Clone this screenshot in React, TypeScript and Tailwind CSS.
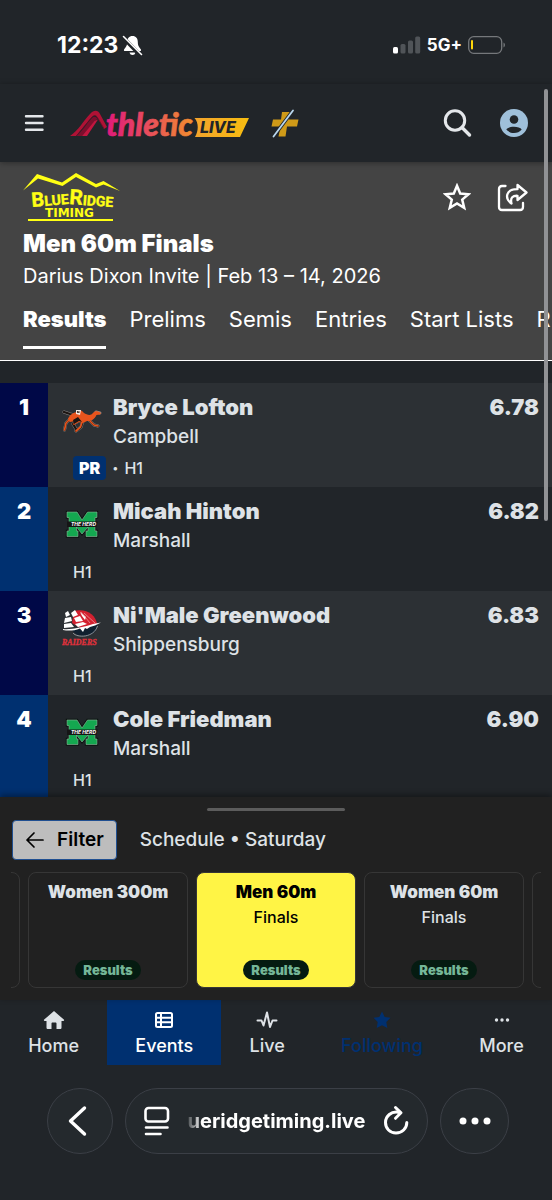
import React from 'react';
import clsx from 'clsx';

type Team = 'campbell' | 'marshall' | 'shippensburg';

interface Result {
  place: number;
  name: string;
  school: string;
  team: Team;
  heat: string;
  mark: string;
  pr?: boolean;
}

const results: Result[] = [
  { place: 1, name: 'Bryce Lofton', school: 'Campbell', team: 'campbell', heat: 'H1', mark: '6.78', pr: true },
  { place: 2, name: 'Micah Hinton', school: 'Marshall', team: 'marshall', heat: 'H1', mark: '6.82' },
  { place: 3, name: "Ni'Male Greenwood", school: 'Shippensburg', team: 'shippensburg', heat: 'H1', mark: '6.83' },
  { place: 4, name: 'Cole Friedman', school: 'Marshall', team: 'marshall', heat: 'H1', mark: '6.90' },
];

const tabs = ['Results', 'Prelims', 'Semis', 'Entries', 'Start Lists', 'R'];

const events = [
  { title: 'Women 300m', round: '', active: false },
  { title: 'Men 60m', round: 'Finals', active: true },
  { title: 'Women 60m', round: 'Finals', active: false },
];

function StatusBar() {
  return (
    <div className="flex items-center justify-between pt-[30px] pl-[57px] pr-[46px] text-white">
      <div className="flex items-center gap-1">
        <span className="text-[23px] leading-[30px] font-bold">12:23</span>
        <svg width="21" height="21" viewBox="0 0 21 21" fill="none">
          <path d="M10.500 1C7 1 5.200 3.500 5.200 7C5.200 11 3.800 12 2.200 14.200C1.600 15.200 2 16 3 16H18C19 16 19.400 15.200 18.800 14.200C17.200 12 15.800 11 15.800 7C15.800 3.500 14 1 10.500 1Z" fill="white" />
          <path d="M7.500 17.500H13.500C13 19.200 12 20 10.500 20S8 19.200 7.500 17.500Z" fill="white" />
          <path d="M0.500 2L18.500 20.500" stroke="#212529" strokeWidth="4" />
          <path d="M1.500 1.500L19.500 19.500" stroke="white" strokeWidth="1.600" strokeLinecap="round" />
        </svg>
      </div>
      <div className="flex items-center gap-[6px]">
        <svg width="28" height="18" viewBox="0 0 28 18">
          <rect x="0" y="11" width="5" height="6.500" rx="1.500" fill="white" />
          <rect x="7.500" y="8" width="5" height="9.500" rx="1.500" fill="#505458" />
          <rect x="15" y="4.500" width="5" height="13" rx="1.500" fill="#505458" />
          <rect x="22.200" y="0.500" width="5" height="17" rx="1.500" fill="#505458" />
        </svg>
        <span className="text-[17px] leading-[30px] font-bold">5G+</span>
        <svg width="38" height="18" viewBox="0 0 38 18" fill="none">
          <rect x="0.700" y="0.700" width="33" height="16.600" rx="5" stroke="#75787b" strokeWidth="1.300" />
          <rect x="3" y="4" width="2" height="9.500" rx="1" fill="#ffd60a" />
          <path d="M35.500 6.500C37.500 7.500 37.500 10.500 35.500 11.500Z" fill="#75787b" />
        </svg>
      </div>
    </div>
  );
}

function AthleticLiveLogo() {
  return (
    <svg width="180" height="44" viewBox="0 -8 180 44" role="img" aria-label="AthleticLIVE">
      <defs>
        <linearGradient id="wordmark" gradientUnits="userSpaceOnUse" x1="35" y1="0" x2="126" y2="0">
          <stop offset="0" stopColor="#e0187c" />
          <stop offset="0.500" stopColor="#e8505a" />
          <stop offset="1" stopColor="#f2932a" />
        </linearGradient>
        <linearGradient id="badge" x1="0" y1="0" x2="1" y2="0">
          <stop offset="0" stopColor="#f2a32c" />
          <stop offset="1" stopColor="#f7bd10" />
        </linearGradient>
      </defs>
      <path d="M0 27C8 22 14 11 20 5C24 0.500 28 1 30 5L37 18L34 20L27 8C25 5.500 23 6.500 21 9L6 27Z" fill="#b01235" />
      <path d="M6 27C12 23 17 14 22 9C24 7 26 7.500 27.500 10L24 13L12 27Z" fill="#7d0f2d" />
      <path d="M12 27L24.500 12L28 10.500L17 27Z" fill="#c2163f" />
      <path d="M6.500 27L21.500 8.500C24 6 26 6 27.500 8.500L34 19.500" fill="none" stroke="#5e0d26" strokeWidth="0.700" />
      <text x="36" y="27" fill="url(#wordmark)" stroke="url(#wordmark)" strokeWidth="0.600" className="font-['Lato'] text-[32px] font-black italic">thletic</text>
      <path d="M124.500 9H179L170 28H125C128.500 22 129 14 124.500 9Z" fill="url(#badge)" />
      <text x="130" y="24" fill="#212529" className="font-['Inter'] text-[16px] font-extrabold italic">LIVE</text>
    </svg>
  );
}

function TopNav() {
  return (
    <nav className="relative z-10 flex h-[78px] items-center pl-6 pr-6 shadow-[0_1px_6px_rgba(0,0,0,0.35)]">
      <button aria-label="Menu">
        <svg width="20" height="20" viewBox="0 0 20 20" stroke="#e4e7ea" strokeWidth="2.400" strokeLinecap="round">
          <path d="M2 3.200H18.500M2 10H18.500M2 16.800H18.500" />
        </svg>
      </button>
      <a href="#" className="ml-[26px]">
        <AthleticLiveLogo />
      </a>
      <a href="#" className="ml-[21px]" aria-label="Plus">
        <svg width="29" height="34" viewBox="0 0 29 34">
          <path d="M11 6H19L17.500 13.500H27.500L26 20.500H16L14.500 30.500H7.500L9.500 20.500H0.500L2 13.500H10Z" fill="#cf9a18" />
          <path d="M2.500 30.500L22 4.500" stroke="#212529" strokeWidth="3.600" />
          <path d="M2.500 30.500L22 4.500" stroke="#b9d7ee" strokeWidth="1.800" strokeLinecap="round" />
        </svg>
      </a>
      <div className="ml-auto flex items-center gap-7">
        <button aria-label="Search">
          <svg width="30" height="30" viewBox="0 0 30 30" fill="none" stroke="#e4e7ea" strokeLinecap="round">
            <circle cx="13" cy="12.500" r="9.700" strokeWidth="3" />
            <path d="M20 19.500L27.500 27" strokeWidth="3.400" />
          </svg>
        </button>
        <button aria-label="Account">
          <svg width="28" height="28" viewBox="0 0 28 28">
            <circle cx="14" cy="14" r="14" fill="#9fc0da" />
            <circle cx="14" cy="10.500" r="4.300" fill="#212529" />
            <path d="M6.300 20.500C8.500 16.700 19.500 16.700 21.700 20.500C18 25.200 10 25.200 6.300 20.500Z" fill="#212529" />
          </svg>
        </button>
      </div>
    </nav>
  );
}

function BlueRidgeLogo() {
  return (
    <svg width="98" height="54" viewBox="0 0 98 54" fill="#ffff14" role="img" aria-label="Blue Ridge Timing">
      <path d="M0 20.500L14 4L39 12.500L53 3L73 14L80.500 11L97 21L80.500 14.500L73 17.500L53 7L39.500 16L15 8.500Z" />
      <g className="font-['Roboto'] font-bold" stroke="#ffff14" strokeWidth="0.400">
        <text x="9" y="37" transform="rotate(-5 9 37)" className="text-[14px]">
          <tspan className="text-[20px]">B</tspan>LUE
        </text>
        <text x="46" y="34" transform="rotate(4 46 34)" className="text-[14px]">
          <tspan className="text-[21px]">R</tspan>IDGE
        </text>
      </g>
      <text x="22" y="47" className="font-['DejaVu_Sans'] text-[12px] font-bold">TIMING</text>
      <rect x="5" y="49" width="85" height="2" />
    </svg>
  );
}

function EventHeader() {
  return (
    <header className="overflow-hidden border-b border-white bg-[#444444] pt-2 pb-[11px] pl-[23px] text-white">
      <div className="flex items-center justify-between pr-6">
        <BlueRidgeLogo />
        <div className="flex items-center gap-[26px]">
          <button aria-label="Follow event">
            <svg width="28" height="28" viewBox="0 0 28 28" fill="none" stroke="white" strokeWidth="2.500">
              <path d="M14 2.800L17.200 10.500L25.500 11.200L19.200 16.600L21.200 24.800L14 20.400L6.800 24.800L8.800 16.600L2.500 11.200L10.800 10.500Z" />
            </svg>
          </button>
          <button aria-label="Share">
            <svg width="31" height="29" viewBox="0 0 31 29" fill="none" stroke="white" strokeWidth="2.300" strokeLinejoin="round" strokeLinecap="round">
              <path d="M8.500 3H5C3 3 2 4 2 6V24C2 26 3 27 5 27H23C25 27 26 26 26 24V20" />
              <path d="M20.500 2L29.500 9.500L20.500 17V12.800C16 12.500 13 14.500 14.500 20.500C7.500 15.500 8.500 6 20.500 6.200Z" />
            </svg>
          </button>
        </div>
      </div>
      <h1 className="mt-[5px] text-2xl leading-[30px] font-black">Men 60m Finals</h1>
      <p className="mt-[3px] text-[20px] leading-7">Darius Dixon Invite | Feb 13 – 14, 2026</p>
      <div className="mt-[14px] flex gap-[23px]">
        {tabs.map((tab, i) => (
          <button
            key={tab}
            className={clsx(
              'shrink-0 border-b-[3px] pb-3 text-[22px] leading-[30px]',
              i === 0 ? 'border-white font-black' : 'border-transparent',
            )}
          >
            {tab}
          </button>
        ))}
      </div>
    </header>
  );
}

function TeamLogo({ team }: { team: Team }) {
  if (team === 'campbell') {
    return (
      <svg width="40" height="38" viewBox="0 0 40 38" fill="none">
        <g stroke="#8f8a86" strokeWidth="3" strokeLinejoin="round" strokeLinecap="round">
          <path d="M12 14L8 13L2 11M10 16L4 22L2.500 29M17 20L11 23L14 28M21 20L19 26L14 30M26 18L32 24L36 25M24 17L31 16L34 11L38 12" />
        </g>
        <g stroke="#1c1512" strokeWidth="2.300" strokeLinejoin="round" strokeLinecap="round">
          <path d="M12 14L8 13L2 11M10 16L4 22L2.500 29M17 20L11 23L14 28M21 20L19 26L14 30M26 18L32 24L36 25" />
        </g>
        <path d="M6 18C8 13 12 12 14 11C17 8 20 9 22 12C25 14 29 15 31 12C33 9.500 36 10 39 12L38 13.500L34.500 14C32 19 29 20 25 20L21 22L13 20L8 21Z" fill="#e8541d" />
        <path d="M10 16L4 22L2.500 29M20.500 20L18.500 26L14 30M26 18L32 24L36 25M17 20L12 23" stroke="#e8541d" strokeWidth="1.700" strokeLinecap="round" strokeLinejoin="round" />
        <path d="M11 19L16 16L20 21L17 20L12 23Z" fill="#1c1512" />
        <path d="M14 9L19 9L18 14L14 13Z" fill="#f2e8e2" />
        <path d="M15.500 12V10L17 12V10" stroke="#3b2620" strokeWidth="0.800" />
      </svg>
    );
  }
  if (team === 'marshall') {
    return (
      <svg width="40" height="38" viewBox="0 0 40 38">
        <path
          d="M5 7H15L20 15L25.500 7H35V12.500H33V26H35V31.500H24V26H26V22L20 29L14.500 22V26H16V31.500H5V26H7V12.500H5Z"
          fill="#14a850"
          stroke="#0b1510"
          strokeWidth="2.400"
        />
        <path
          d="M5 7H15L20 15L25.500 7H35V12.500H33V26H35V31.500H24V26H26V22L20 29L14.500 22V26H16V31.500H5V26H7V12.500H5Z"
          fill="#14a850"
          stroke="#8fb39c"
          strokeWidth="0.600"
        />
        <path d="M5 16.500H36L34 22H5Z" fill="#151515" />
        <text x="9" y="21" fill="white" className="font-['Inter'] text-[5px] font-bold italic">THE HERD</text>
      </svg>
    );
  }
  return (
    <svg width="40" height="38" viewBox="0 0 40 38">
      <path d="M12 2C24 -1 34 6 35 15L20 20L10 14Z" fill="#d3202f" />
      <path d="M10 21L35 15C36 22 30 27 22 27C16 27 12 24 10 21Z" fill="#10202f" />
      <path d="M11 24C15 29 32 29 35.500 17" fill="none" stroke="#a9adb2" strokeWidth="0.800" />
      <path d="M1 20C8 21 22 18 31 15L39 13.500L33 16.500L28 18L25 20L23 19L21 23L18 19.500C12 22 6 22 1 21Z" fill="white" />
      <path d="M3 4L6 2L8 6L4 8ZM9 4L13 1L16 6L11 8ZM3 9L9 8L10 12L2 14ZM12 9L18 7L21 12L14 13ZM2 15L9 14L12 18L2 19ZM13 15L21 13L25 15L16 18ZM18 3L24 8L23 11L20 7Z" fill="white" />
      <path d="M22 4L33 14M19 3L28 14" stroke="#f1b5b9" strokeWidth="0.600" />
      <text x="0" y="36" fill="#e0303c" stroke="#e0303c" strokeWidth="0.300" className="font-['Liberation_Serif'] text-[8px] font-bold italic">RAIDERS</text>
    </svg>
  );
}

function ResultRow({ result }: { result: Result }) {
  const odd = result.place % 2 === 1;
  return (
    <tr className={clsx('h-[104px] align-top', odd ? 'bg-[#2c3034]' : 'bg-[#212529]')}>
      <td className={clsx('w-12 pt-[9px] text-center text-[22px] leading-[30px] font-black text-white', odd ? 'bg-[#000847]' : 'bg-[#003070]')}>
        {result.place}
      </td>
      <td className="pt-[9px] pl-[14px]">
        <div className="flex gap-[11px]">
          <div className="pt-[9px]">
            <TeamLogo team={result.team} />
          </div>
          <div>
            <div className="text-[22px] leading-[30px] font-black">{result.name}</div>
            <div className="text-[19px] leading-[30px] font-medium">{result.school}</div>
          </div>
        </div>
        <div className="mt-1 flex items-center gap-[6px] pl-[11px] text-base leading-6">
          {result.pr && (
            <>
              <span className="rounded bg-[#003070] px-[6px] font-black text-white">PR</span>
              <span className="text-[11px]">•</span>
            </>
          )}
          <span className="font-medium">{result.heat}</span>
        </div>
      </td>
      <td className="pt-[9px] pr-[13px] text-right text-[22px] leading-[30px] font-black">{result.mark}</td>
    </tr>
  );
}

function ScheduleDrawer() {
  return (
    <section className="relative bg-[#212121] pt-[11px] pb-3 shadow-[0_-2px_6px_rgba(0,0,0,0.4)]">
      <div className="mx-auto h-[3px] w-1/4 rounded-full bg-[#5c5c5c]" />
      <div className="mt-[9px] flex items-center gap-[23px] pl-3">
        <button className="flex h-10 items-center gap-3 rounded border border-[#1f4f91] bg-[#bdbdbd] px-3 text-[19px] font-semibold text-black">
          <svg width="20" height="18" viewBox="0 0 20 18" fill="none" stroke="black" strokeWidth="1.700" strokeLinecap="round" strokeLinejoin="round">
            <path d="M18 9H2M9 2L2 9L9 16" />
          </svg>
          Filter
        </button>
        <span className="text-[19px] font-medium">Schedule • Saturday</span>
      </div>
      <div className="mx-[11px] mt-3 flex justify-center gap-2 overflow-hidden">
        <div className="w-40 shrink-0 rounded-lg border border-[#363636]" />
        {events.map((event) => (
          <button
            key={event.title}
            className={clsx(
              'flex h-[116px] w-40 shrink-0 flex-col items-center rounded-lg border border-[#363636] pt-[7px] pb-[7px]',
              event.active && 'bg-[#fff445] text-black',
            )}
          >
            <span className="text-[17px] leading-6 font-black">{event.title}</span>
            <span className="text-base leading-[26px] font-medium">{event.round}</span>
            <span className="mt-auto rounded-full bg-[#051b11] px-2 text-[13px] leading-5 font-black text-[#75b798]">Results</span>
          </button>
        ))}
        <div className="w-40 shrink-0 rounded-lg border border-[#363636]" />
      </div>
    </section>
  );
}

function HomeIcon() {
  return (
    <svg width="22" height="20" viewBox="0 0 22 20" fill="currentColor">
      <path d="M11 1L20.800 9.600C21.500 10.300 21 11 20.300 11H18.500V17.500C18.500 18.600 18 19 17 19H13.500V13.500C13.500 12.800 13 12.500 12.500 12.500H9.500C9 12.500 8.500 12.800 8.500 13.500V19H5C4 19 3.500 18.600 3.500 17.500V11H1.700C1 11 0.500 10.300 1.200 9.600Z" />
    </svg>
  );
}

function EventsIcon() {
  return (
    <svg width="20" height="20" viewBox="0 0 20 20" fill="none" stroke="currentColor" strokeWidth="2">
      <rect x="2" y="3" width="16" height="14" rx="1.500" />
      <path d="M2 7.700H18M2 12.300H18M7 3V17" />
    </svg>
  );
}

function LiveIcon() {
  return (
    <svg width="22" height="20" viewBox="0 0 22 20" fill="none" stroke="currentColor" strokeWidth="2" strokeLinejoin="round" strokeLinecap="round">
      <path d="M1.500 10.500H5.500L7.500 15.500L11 2.500L14 17L16.500 10.500H20.500" />
    </svg>
  );
}

function FollowingIcon() {
  return (
    <svg width="20" height="20" viewBox="0 0 20 20" fill="currentColor">
      <path d="M10 1.500L12.700 7L18.500 7.800L14.300 12L15.300 18L10 15.200L4.700 18L5.700 12L1.500 7.800L7.300 7Z" />
    </svg>
  );
}

function MoreIcon() {
  return (
    <svg width="20" height="20" viewBox="0 0 20 20" fill="currentColor">
      <circle cx="4.500" cy="10" r="1.700" />
      <circle cx="10" cy="10" r="1.700" />
      <circle cx="15.500" cy="10" r="1.700" />
    </svg>
  );
}

function BottomNav() {
  const items = [
    { label: 'Home', icon: <HomeIcon /> },
    { label: 'Events', icon: <EventsIcon />, className: 'bg-[#003070] text-white' },
    { label: 'Live', icon: <LiveIcon /> },
    { label: 'Following', icon: <FollowingIcon />, className: 'text-[#003070]' },
    { label: 'More', icon: <MoreIcon /> },
  ];
  return (
    <nav className="flex">
      {items.map((item) => (
        <a
          key={item.label}
          href="#"
          className={clsx('flex h-[65px] flex-auto flex-col items-center pt-[10px] text-[18px] leading-8 font-medium', item.className)}
        >
          {item.icon}
          {item.label}
        </a>
      ))}
    </nav>
  );
}

function BrowserBar() {
  return (
    <div className="flex gap-3 pt-[23px] pr-[43px] pb-[46px] pl-[47px] text-white">
      <button aria-label="Back" className="flex h-[66px] w-[66px] items-center justify-center rounded-full border border-[#3b3f46] bg-[#24292d]">
        <svg width="30" height="32" viewBox="0 0 30 32" fill="none" stroke="white" strokeWidth="3.400" strokeLinecap="round" strokeLinejoin="round">
          <path d="M19.500 3L5.500 16L19.500 29" />
        </svg>
      </button>
      <div className="flex h-[66px] flex-1 items-center justify-between rounded-full border border-[#3b3f46] bg-[#24292d] px-[17px]">
        <button aria-label="Page menu">
          <svg width="28" height="30" viewBox="0 0 28 30" fill="none" stroke="white" strokeWidth="2.600" strokeLinecap="round">
            <rect x="2.500" y="2" width="22.500" height="13.500" rx="3" />
            <path d="M3 21.500H24.500M3 28H17.500" />
          </svg>
        </button>
        <button className="text-[20px] leading-7 font-bold [mask-image:linear-gradient(to_right,rgba(0,0,0,0.2),black_14px)]">
          ueridgetiming.live
        </button>
        <button aria-label="Reload">
          <svg width="28" height="32" viewBox="0 0 28 32" fill="none" stroke="white" strokeWidth="3" strokeLinecap="round" strokeLinejoin="round">
            <path d="M17.500 7.500C9 5.500 3.500 11.500 3.500 17.500C3.500 23.500 8 28 14 28S24.800 23.500 24.800 17.500" />
            <path d="M13.500 2.500L19 7.800L13.500 13.300" />
          </svg>
        </button>
      </div>
      <button aria-label="More options" className="flex h-[66px] w-[69px] items-center justify-center rounded-full border border-[#3b3f46] bg-[#24292d]">
        <svg width="32" height="8" viewBox="0 0 32 8" fill="white">
          <circle cx="4" cy="4" r="3.500" />
          <circle cx="16" cy="4" r="3.500" />
          <circle cx="28" cy="4" r="3.500" />
        </svg>
      </button>
    </div>
  );
}

export default function App() {
  return (
    <div className="relative flex h-screen flex-col overflow-hidden bg-[#212529] font-['Inter',sans-serif] text-[#dee2e6]">
      <div className="h-[84px]">
        <StatusBar />
      </div>
      <TopNav />
      <EventHeader />
      <main className="min-h-0 flex-1 overflow-hidden pt-[22px]">
        <table className="w-full border-collapse">
          <tbody>
            {results.map((result) => (
              <ResultRow key={result.place} result={result} />
            ))}
          </tbody>
        </table>
      </main>
      <ScheduleDrawer />
      <BottomNav />
      <BrowserBar />
      {/* overlay scrollbar thumb */}
      <div className="absolute top-[89px] right-1 z-20 h-[432px] w-1 rounded-full bg-[#919295]" />
    </div>
  );
}
